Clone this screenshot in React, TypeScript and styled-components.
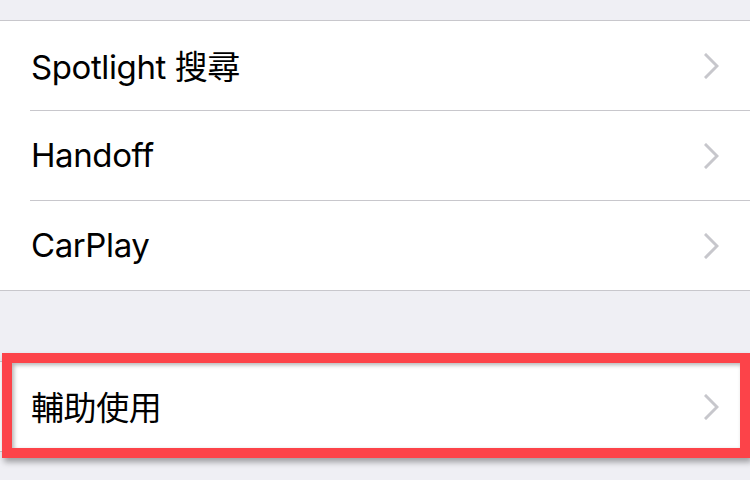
import React from 'react';
import styled, { createGlobalStyle } from 'styled-components';

const GlobalStyle = createGlobalStyle`
  html, body {
    margin: 0;
    padding: 0;
    background: #efeff4;
  }
  body {
    font-family: Inter, "Noto Sans CJK TC", "Noto Sans", sans-serif;
    -webkit-font-smoothing: antialiased;
  }
`;

const Page = styled.div`
  width: 750px;
  height: 480px;
  overflow: hidden;
  background: #efeff4;
`;

const Group = styled.section<{ $top: number }>`
  position: relative;
  margin-top: ${(p) => p.$top}px;
  background: #ffffff;
  border-top: 1px solid #c8c7cc;
  border-bottom: 1px solid #c8c7cc;
`;

const Row = styled.div`
  position: relative;
  display: flex;
  align-items: center;
  justify-content: space-between;
  height: 89px;
  padding: 0 31px;
  box-sizing: border-box;

  & + &::before {
    content: '';
    position: absolute;
    top: -1px;
    left: 30px;
    right: 0;
    height: 1px;
    background: #c8c7cc;
  }
  & + & {
    margin-top: 1px;
  }
`;

const Label = styled.span`
  font-size: 33px;
  color: #000000;
  letter-spacing: -0.4px;
  margin-top: -2px;
`;

const Highlight = styled.div`
  position: absolute;
  top: -9px;
  left: 2px;
  right: 0;
  bottom: -7px;
  border: 10px solid #fc4349;
  box-sizing: border-box;
  box-shadow: 2px 4px 6px rgba(0, 0, 0, 0.35), inset 2px 2px 4px rgba(0, 0, 0, 0.3);
  pointer-events: none;
`;

const Chevron = () => (
  <svg width="15" height="26" viewBox="0 0 15 26" fill="none">
    <path d="M2 2 L13 13 L2 24" stroke="#c7c7cc" strokeWidth="3" strokeLinecap="square" />
  </svg>
);

const items = ['Spotlight 搜尋', 'Handoff', 'CarPlay'];

const App: React.FC = () => {
  return (
    <Page>
      <GlobalStyle />
      <Group $top={20}>
        {items.map((label) => (
          <Row key={label}>
            <Label>{label}</Label>
            <Chevron />
          </Row>
        ))}
      </Group>
      <Group $top={70}>
        <Row>
          <Label>輔助使用</Label>
          <Chevron />
        </Row>
        <Highlight />
      </Group>
    </Page>
  );
};

export default App;
